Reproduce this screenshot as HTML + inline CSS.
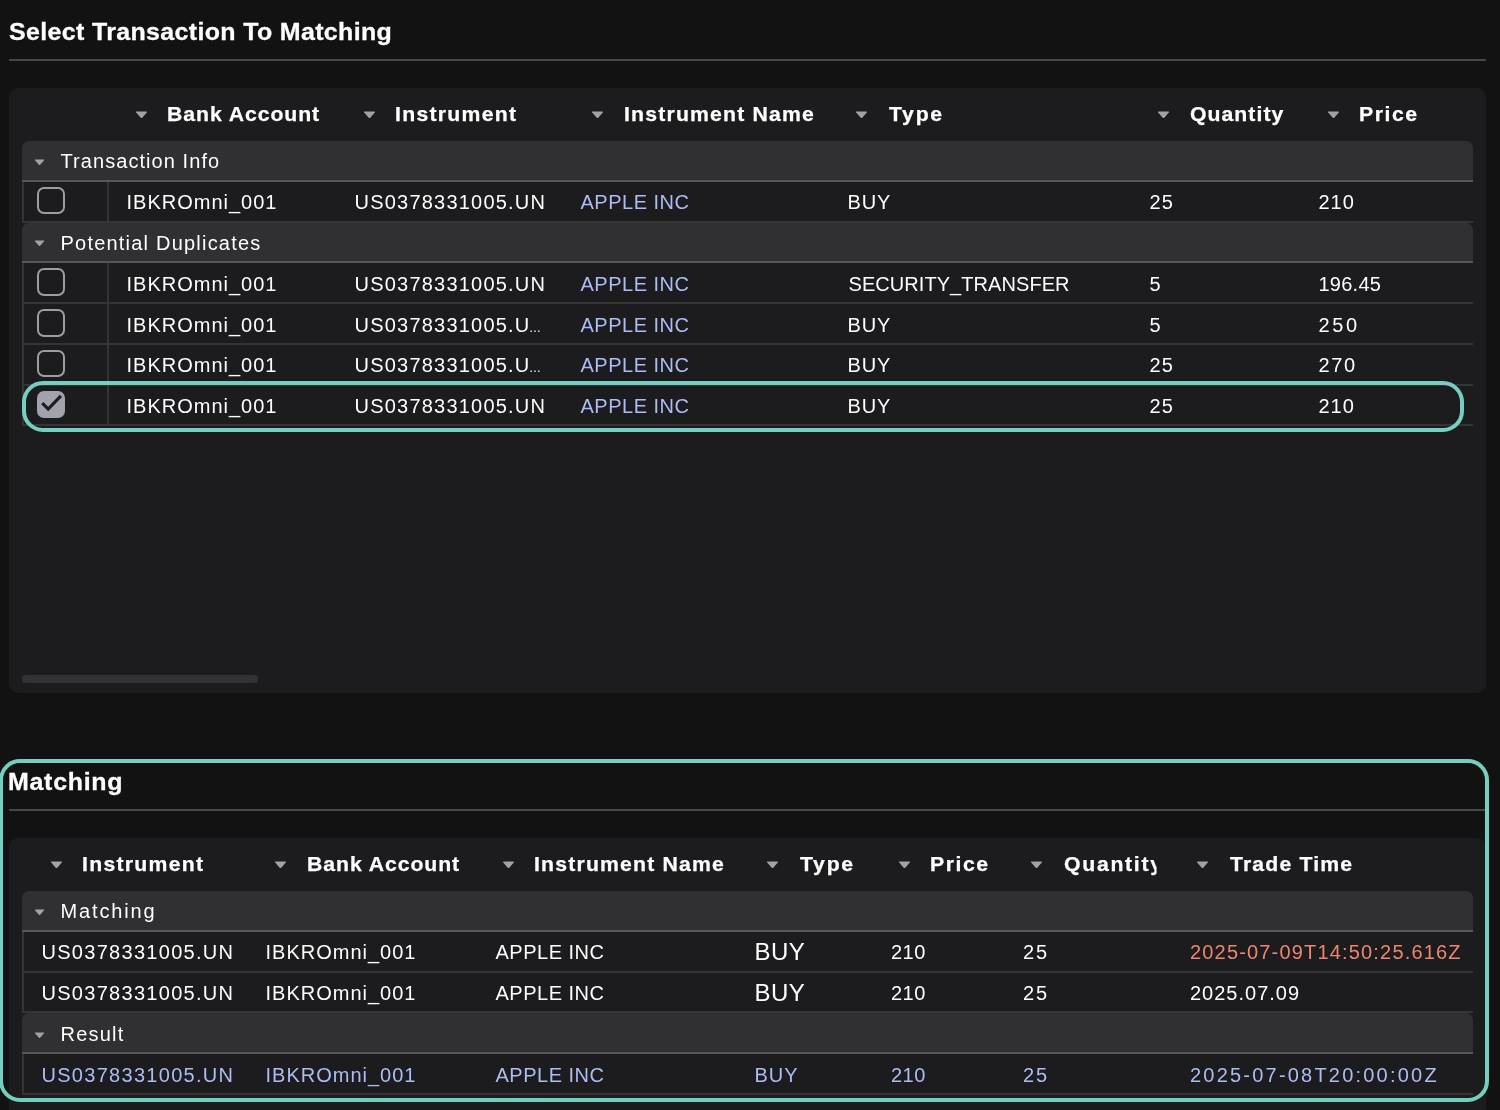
<!DOCTYPE html>
<html lang="en"><head><meta charset="utf-8"><title>Transaction Matching</title>
<style>
*{box-sizing:border-box;margin:0;padding:0}
html,body{width:1500px;height:1110px;overflow:hidden;background:#121212}
body{will-change:transform;font-family:"Liberation Sans",Arial,sans-serif;color:#fff;position:relative;font-size:20px}
.sec{position:absolute;left:0;width:1500px}
#s1{top:0;height:750px}
#s2{top:750px;height:360px}
h2{position:absolute;left:0;top:13px;height:36px;line-height:36px;font-size:24px;font-weight:700;width:1486px;white-space:nowrap}
h2 .t{position:absolute;top:1px;-webkit-text-stroke:0.3px #fff;transform:scaleX(1.04);transform-origin:0 50%}
.hr{position:absolute;left:9px;top:59px;width:1477px;height:2px;background:#46464b}
.panel{position:absolute;left:9px;top:88px;width:1477px;background:#1c1c1e;border-radius:9px;overflow:hidden}
#s1 .panel{height:605px}
#s2 .panel{height:300px;border-bottom-left-radius:0;border-bottom-right-radius:0}
.thead{position:absolute;left:-9px;top:0;width:1500px;height:53px}
.thead .t{top:6px;height:40px;line-height:40px}
.t{position:absolute;white-space:pre;top:1px}
.th{font-weight:700;font-size:20.4px;-webkit-text-stroke:0.25px #fff;transform:scaleX(1.04);transform-origin:0 50%}
.clip>span{display:inline-block}
.clip{overflow:hidden}
.arr{position:absolute;top:22.5px;display:block}
.tbody{position:absolute;left:13px;top:53px;width:1451px}
.group{position:relative;height:40.75px;background:#303032;border-bottom:2px solid #55555b;border-radius:7px 7px 0 0;line-height:38.75px}
.group .arr{top:17.6px}
.row{position:relative;height:40.75px;border-bottom:2px solid #343437;border-left:2px solid #343437;line-height:39.25px}
.row .t{margin-left:-2px}
.chkcell{position:absolute;left:-2px;top:0;width:87px;height:100%;border-right:2px solid #343437}
.chk{position:absolute;left:15px;top:5px;width:28px;height:27.5px;border:2px solid #9b9ca6;border-radius:7px}
.chk.on{background:#a1a2ac;border-color:#a1a2ac}
.chk svg{position:absolute;left:-2px;top:-2px}
.peri,.peri .t{color:#adbcf5}
.salmon{color:#ee866f}
.big{font-size:24px;top:0.4px}
.ell{font-size:12px;top:3.8px}
.dy1 .t{top:2px}
.dy1 .ell{top:4.8px}
.group.dy1 .arr{top:18.4px}
.selbox{position:absolute;left:22px;top:381px;width:1442px;height:51px;border:4px solid #74cfc0;border-radius:21px}
.sbar{position:absolute;left:13px;top:587px;width:236px;height:8px;border-radius:4px;background:#323235}
.hl{position:absolute;left:-1px;top:9px;width:1490px;height:343px;border:4px solid #74cfc0;border-radius:21px;pointer-events:none}
</style></head>
<body>
<section class="sec" id="s1">
<h2><span id="ttl0" class="t " style="left:9.40px;letter-spacing:0.338px;">Select Transaction To Matching</span></h2>
<div class="hr"></div>
<div class="panel" style="">
<div class="thead">
<svg class="arr" style="left:135.0px" width="13" height="8" viewBox="0 0 13 8"><path d="M1.6 0.6 H11.4 Q12.6 0.6 11.8 1.6 L7.3 6.7 Q6.5 7.5 5.7 6.7 L1.2 1.6 Q0.4 0.6 1.6 0.6 Z" fill="#a2a2a2"/></svg>
<span id="ah0" class="t th" style="left:166.50px;letter-spacing:0.909px;">Bank Account</span>
<svg class="arr" style="left:363.0px" width="13" height="8" viewBox="0 0 13 8"><path d="M1.6 0.6 H11.4 Q12.6 0.6 11.8 1.6 L7.3 6.7 Q6.5 7.5 5.7 6.7 L1.2 1.6 Q0.4 0.6 1.6 0.6 Z" fill="#a2a2a2"/></svg>
<span id="ah1" class="t th" style="left:394.50px;letter-spacing:1.222px;">Instrument</span>
<svg class="arr" style="left:591.0px" width="13" height="8" viewBox="0 0 13 8"><path d="M1.6 0.6 H11.4 Q12.6 0.6 11.8 1.6 L7.3 6.7 Q6.5 7.5 5.7 6.7 L1.2 1.6 Q0.4 0.6 1.6 0.6 Z" fill="#a2a2a2"/></svg>
<span id="ah2" class="t th" style="left:623.50px;letter-spacing:1.143px;">Instrument Name</span>
<svg class="arr" style="left:855.0px" width="13" height="8" viewBox="0 0 13 8"><path d="M1.6 0.6 H11.4 Q12.6 0.6 11.8 1.6 L7.3 6.7 Q6.5 7.5 5.7 6.7 L1.2 1.6 Q0.4 0.6 1.6 0.6 Z" fill="#a2a2a2"/></svg>
<span id="ah3" class="t th" style="left:888.50px;letter-spacing:1.667px;">Type</span>
<svg class="arr" style="left:1157.0px" width="13" height="8" viewBox="0 0 13 8"><path d="M1.6 0.6 H11.4 Q12.6 0.6 11.8 1.6 L7.3 6.7 Q6.5 7.5 5.7 6.7 L1.2 1.6 Q0.4 0.6 1.6 0.6 Z" fill="#a2a2a2"/></svg>
<span id="ah4" class="t th" style="left:1189.50px;letter-spacing:1.000px;">Quantity</span>
<svg class="arr" style="left:1327.0px" width="13" height="8" viewBox="0 0 13 8"><path d="M1.6 0.6 H11.4 Q12.6 0.6 11.8 1.6 L7.3 6.7 Q6.5 7.5 5.7 6.7 L1.2 1.6 Q0.4 0.6 1.6 0.6 Z" fill="#a2a2a2"/></svg>
<span id="ah5" class="t th" style="left:1358.50px;letter-spacing:1.500px;">Price</span>
</div>
<div class="tbody">
<div class="group "><svg class="arr garr" style="left:11.7px" width="11.05" height="6.8" viewBox="0 0 13 8"><path d="M1.6 0.6 H11.4 Q12.6 0.6 11.8 1.6 L7.3 6.7 Q6.5 7.5 5.7 6.7 L1.2 1.6 Q0.4 0.6 1.6 0.6 Z" fill="#a2a2a2"/></svg><span id="ag0" class="t " style="left:38.50px;letter-spacing:1.067px;">Transaction Info</span></div>
<div class="row ">
<div class="chkcell"><span class="chk"></span></div>
<span id="ar0c0" class="t " style="left:104.50px;letter-spacing:1.000px;">IBKROmni_001</span>
<span id="ar0c1" class="t " style="left:332.50px;letter-spacing:1.214px;">US0378331005.UN</span>
<span id="ar0c3" class="t peri" style="left:558.50px;letter-spacing:0.500px;">APPLE INC</span>
<span id="ar0c4" class="t " style="left:825.50px;letter-spacing:0.900px;">BUY</span>
<span id="ar0c5" class="t " style="left:1127.50px;letter-spacing:1.200px;">25</span>
<span id="ar0c6" class="t " style="left:1296.50px;letter-spacing:1.000px;">210</span>
</div>
<div class="group "><svg class="arr garr" style="left:11.7px" width="11.05" height="6.8" viewBox="0 0 13 8"><path d="M1.6 0.6 H11.4 Q12.6 0.6 11.8 1.6 L7.3 6.7 Q6.5 7.5 5.7 6.7 L1.2 1.6 Q0.4 0.6 1.6 0.6 Z" fill="#a2a2a2"/></svg><span id="ag1" class="t " style="left:38.50px;letter-spacing:1.211px;">Potential Duplicates</span></div>
<div class="row dy1">
<div class="chkcell"><span class="chk"></span></div>
<span id="ar1c0" class="t " style="left:104.50px;letter-spacing:1.000px;">IBKROmni_001</span>
<span id="ar1c1" class="t " style="left:332.50px;letter-spacing:1.214px;">US0378331005.UN</span>
<span id="ar1c3" class="t peri" style="left:558.50px;letter-spacing:0.500px;">APPLE INC</span>
<span id="ar1c4" class="t " style="left:826.50px;letter-spacing:0.062px;">SECURITY_TRANSFER</span>
<span id="ar1c5" class="t " style="left:1127.50px;letter-spacing:1.000px;">5</span>
<span id="ar1c6" class="t " style="left:1296.50px;letter-spacing:0.240px;">196.45</span>
</div>
<div class="row dy1">
<div class="chkcell"><span class="chk"></span></div>
<span id="ar2c0" class="t " style="left:104.50px;letter-spacing:1.000px;">IBKROmni_001</span>
<span id="ar2c1" class="t " style="left:332.50px;letter-spacing:1.214px;">US0378331005.U</span>
<span id="ar2c2" class="t ell" style="left:507.00px;letter-spacing:0.000px;">…</span>
<span id="ar2c3" class="t peri" style="left:558.50px;letter-spacing:0.500px;">APPLE INC</span>
<span id="ar2c4" class="t " style="left:825.50px;letter-spacing:0.900px;">BUY</span>
<span id="ar2c5" class="t " style="left:1127.50px;letter-spacing:1.000px;">5</span>
<span id="ar2c6" class="t " style="left:1296.50px;letter-spacing:2.600px;">250</span>
</div>
<div class="row ">
<div class="chkcell"><span class="chk"></span></div>
<span id="ar3c0" class="t " style="left:104.50px;letter-spacing:1.000px;">IBKROmni_001</span>
<span id="ar3c1" class="t " style="left:332.50px;letter-spacing:1.214px;">US0378331005.U</span>
<span id="ar3c2" class="t ell" style="left:507.00px;letter-spacing:0.000px;">…</span>
<span id="ar3c3" class="t peri" style="left:558.50px;letter-spacing:0.500px;">APPLE INC</span>
<span id="ar3c4" class="t " style="left:825.50px;letter-spacing:0.900px;">BUY</span>
<span id="ar3c5" class="t " style="left:1127.50px;letter-spacing:1.200px;">25</span>
<span id="ar3c6" class="t " style="left:1296.50px;letter-spacing:1.600px;">270</span>
</div>
<div class="row sel">
<div class="chkcell"><span class="chk on"><svg width="28" height="28" viewBox="0 0 28 28"><path d="M5.3 12.1 L11.2 18 L23.9 4.9" fill="none" stroke="#1c1c1e" stroke-width="3.1"/></svg></span></div>
<span id="ar4c0" class="t " style="left:104.50px;letter-spacing:1.000px;">IBKROmni_001</span>
<span id="ar4c1" class="t " style="left:332.50px;letter-spacing:1.214px;">US0378331005.UN</span>
<span id="ar4c3" class="t peri" style="left:558.50px;letter-spacing:0.500px;">APPLE INC</span>
<span id="ar4c4" class="t " style="left:825.50px;letter-spacing:0.900px;">BUY</span>
<span id="ar4c5" class="t " style="left:1127.50px;letter-spacing:1.200px;">25</span>
<span id="ar4c6" class="t " style="left:1296.50px;letter-spacing:1.000px;">210</span>
</div>
</div>
<div class="sbar"></div>
</div>
<div class="selbox"></div>
</section>
<section class="sec" id="s2">
<h2><span id="ttl1" class="t " style="left:8.10px;letter-spacing:0.686px;">Matching</span></h2>
<div class="hr"></div>
<div class="panel">
<div class="thead">
<svg class="arr" style="left:50.0px" width="13" height="8" viewBox="0 0 13 8"><path d="M1.6 0.6 H11.4 Q12.6 0.6 11.8 1.6 L7.3 6.7 Q6.5 7.5 5.7 6.7 L1.2 1.6 Q0.4 0.6 1.6 0.6 Z" fill="#a2a2a2"/></svg>
<span id="bh0" class="t th" style="left:81.50px;letter-spacing:1.222px;">Instrument</span>
<svg class="arr" style="left:274.0px" width="13" height="8" viewBox="0 0 13 8"><path d="M1.6 0.6 H11.4 Q12.6 0.6 11.8 1.6 L7.3 6.7 Q6.5 7.5 5.7 6.7 L1.2 1.6 Q0.4 0.6 1.6 0.6 Z" fill="#a2a2a2"/></svg>
<span id="bh1" class="t th" style="left:306.50px;letter-spacing:0.909px;">Bank Account</span>
<svg class="arr" style="left:502.0px" width="13" height="8" viewBox="0 0 13 8"><path d="M1.6 0.6 H11.4 Q12.6 0.6 11.8 1.6 L7.3 6.7 Q6.5 7.5 5.7 6.7 L1.2 1.6 Q0.4 0.6 1.6 0.6 Z" fill="#a2a2a2"/></svg>
<span id="bh2" class="t th" style="left:533.50px;letter-spacing:1.143px;">Instrument Name</span>
<svg class="arr" style="left:766.0px" width="13" height="8" viewBox="0 0 13 8"><path d="M1.6 0.6 H11.4 Q12.6 0.6 11.8 1.6 L7.3 6.7 Q6.5 7.5 5.7 6.7 L1.2 1.6 Q0.4 0.6 1.6 0.6 Z" fill="#a2a2a2"/></svg>
<span id="bh3" class="t th" style="left:799.50px;letter-spacing:1.667px;">Type</span>
<svg class="arr" style="left:898.0px" width="13" height="8" viewBox="0 0 13 8"><path d="M1.6 0.6 H11.4 Q12.6 0.6 11.8 1.6 L7.3 6.7 Q6.5 7.5 5.7 6.7 L1.2 1.6 Q0.4 0.6 1.6 0.6 Z" fill="#a2a2a2"/></svg>
<span id="bh4" class="t th" style="left:929.50px;letter-spacing:1.500px;">Price</span>
<svg class="arr" style="left:1030.0px" width="13" height="8" viewBox="0 0 13 8"><path d="M1.6 0.6 H11.4 Q12.6 0.6 11.8 1.6 L7.3 6.7 Q6.5 7.5 5.7 6.7 L1.2 1.6 Q0.4 0.6 1.6 0.6 Z" fill="#a2a2a2"/></svg>
<span class="t th clip" style="left:1063.50px;width:89.42px;"><span id="bh5" style="letter-spacing:1.657px">Quantity</span></span>
<svg class="arr" style="left:1196.0px" width="13" height="8" viewBox="0 0 13 8"><path d="M1.6 0.6 H11.4 Q12.6 0.6 11.8 1.6 L7.3 6.7 Q6.5 7.5 5.7 6.7 L1.2 1.6 Q0.4 0.6 1.6 0.6 Z" fill="#a2a2a2"/></svg>
<span id="bh6" class="t th" style="left:1229.50px;letter-spacing:1.111px;">Trade Time</span>
</div>
<div class="tbody">
<div class="group "><svg class="arr garr" style="left:11.7px" width="11.05" height="6.8" viewBox="0 0 13 8"><path d="M1.6 0.6 H11.4 Q12.6 0.6 11.8 1.6 L7.3 6.7 Q6.5 7.5 5.7 6.7 L1.2 1.6 Q0.4 0.6 1.6 0.6 Z" fill="#a2a2a2"/></svg><span id="bg0" class="t " style="left:38.50px;letter-spacing:1.857px;">Matching</span></div>
<div class="row ">
<span id="br0c0" class="t " style="left:19.50px;letter-spacing:1.286px;">US0378331005.UN</span>
<span id="br0c1" class="t " style="left:243.50px;letter-spacing:1.000px;">IBKROmni_001</span>
<span id="br0c2" class="t " style="left:473.50px;letter-spacing:0.500px;">APPLE INC</span>
<span id="br0c3" class="t big" style="left:732.50px;letter-spacing:0.500px;">BUY</span>
<span id="br0c4" class="t " style="left:869.00px;letter-spacing:0.500px;">210</span>
<span id="br0c5" class="t " style="left:1001.00px;letter-spacing:2.000px;">25</span>
<span id="br0c6" class="t salmon" style="left:1168.00px;letter-spacing:1.174px;">2025-07-09T14:50:25.616Z</span>
</div>
<div class="row ">
<span id="br1c0" class="t " style="left:19.50px;letter-spacing:1.286px;">US0378331005.UN</span>
<span id="br1c1" class="t " style="left:243.50px;letter-spacing:1.000px;">IBKROmni_001</span>
<span id="br1c2" class="t " style="left:473.50px;letter-spacing:0.500px;">APPLE INC</span>
<span id="br1c3" class="t big" style="left:732.50px;letter-spacing:0.500px;">BUY</span>
<span id="br1c4" class="t " style="left:869.00px;letter-spacing:0.500px;">210</span>
<span id="br1c5" class="t " style="left:1001.00px;letter-spacing:2.000px;">25</span>
<span id="br1c6" class="t " style="left:1168.00px;letter-spacing:1.000px;">2025.07.09</span>
</div>
<div class="group dy1"><svg class="arr garr" style="left:11.7px" width="11.05" height="6.8" viewBox="0 0 13 8"><path d="M1.6 0.6 H11.4 Q12.6 0.6 11.8 1.6 L7.3 6.7 Q6.5 7.5 5.7 6.7 L1.2 1.6 Q0.4 0.6 1.6 0.6 Z" fill="#a2a2a2"/></svg><span id="bg1" class="t " style="left:38.50px;letter-spacing:1.200px;">Result</span></div>
<div class="row peri dy1">
<span id="br2c0" class="t " style="left:19.50px;letter-spacing:1.286px;">US0378331005.UN</span>
<span id="br2c1" class="t " style="left:243.50px;letter-spacing:1.000px;">IBKROmni_001</span>
<span id="br2c2" class="t " style="left:473.50px;letter-spacing:0.500px;">APPLE INC</span>
<span id="br2c3" class="t " style="left:732.50px;letter-spacing:1.000px;">BUY</span>
<span id="br2c4" class="t " style="left:869.00px;letter-spacing:0.500px;">210</span>
<span id="br2c5" class="t " style="left:1001.00px;letter-spacing:2.000px;">25</span>
<span id="br2c6" class="t " style="left:1168.00px;letter-spacing:2.211px;">2025-07-08T20:00:00Z</span>
</div>
</div>
</div>
<div class="hl"></div>
</section>
</body></html>
